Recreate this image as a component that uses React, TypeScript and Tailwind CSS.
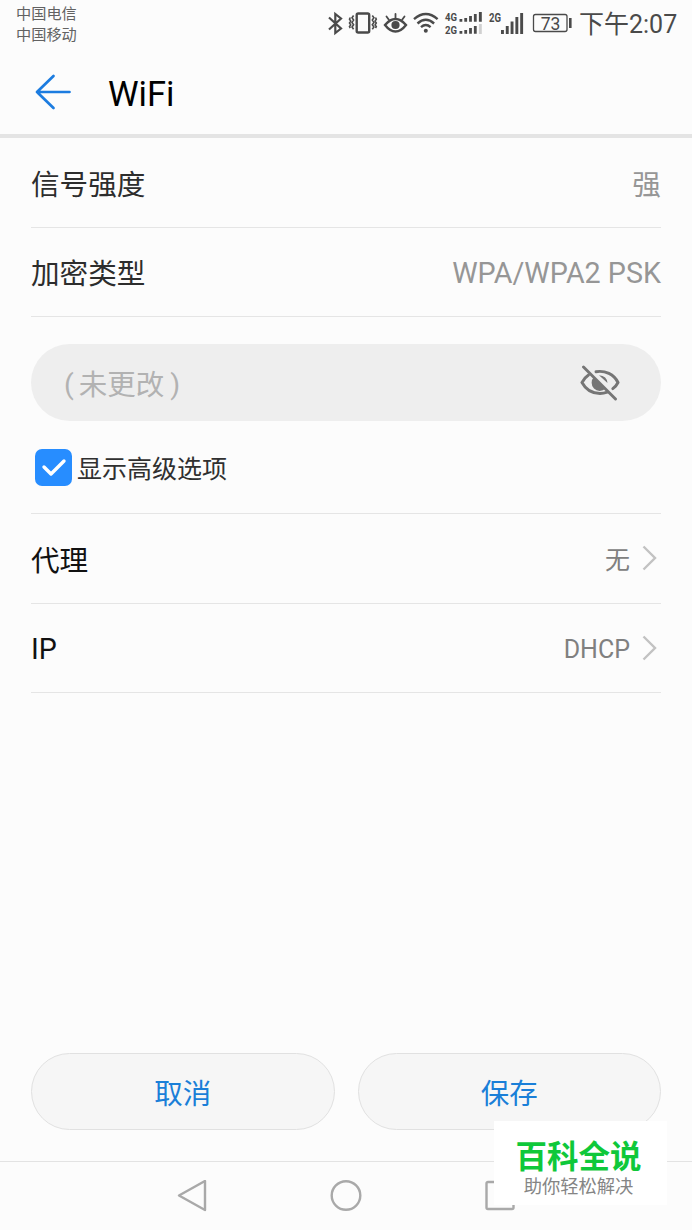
import React from "react";

const FONT = "font-['Roboto','Noto_Sans_CJK_SC',sans-serif]";

function StatusIcons() {
  return (
    <div className="flex h-12 text-[#4a4a4a]" aria-hidden="true">
      {/* bluetooth */}
      <svg className="h-12 w-[18px]" viewBox="326 0 18 48" fill="none" stroke="currentColor" strokeWidth="2.200">
        <path d="M329 17.500 341 28.500 335.300 33V14L341 18.500 329 29.500" />
      </svg>
      {/* vibrate */}
      <svg className="h-12 w-[36px]" viewBox="344 0 36 48" fill="none" stroke="currentColor">
        <rect x="356.700" y="13.500" width="12.500" height="19" rx="1.500" strokeWidth="2.400" />
        <path d="M353.600 15.500l-1.600 2.300 1.600 2.300-1.600 2.300 1.600 2.300-1.600 2.300 1.600 2.300M350.300 17.500l-.8 1.700 1.200 1.900-1.200 1.900 1.200 1.900-1.200 1.700.8 1.400M372.300 15.500l1.600 2.300-1.600 2.300 1.600 2.300-1.600 2.300 1.600 2.300-1.600 2.300M375.500 17.500l.8 1.700-1.200 1.900 1.200 1.900-1.200 1.900 1.200 1.700-.8 1.400" strokeWidth="1.600" />
      </svg>
      {/* eye comfort */}
      <svg className="h-12 w-[30px]" viewBox="380 0 30 48" fill="none" stroke="currentColor" strokeLinecap="round">
        <path d="M385 25Q390 19 395.500 19T406 25Q401 31.500 395.500 31.500T385 25Z" strokeWidth="2.400" />
        <circle cx="395.500" cy="25" r="4.100" fill="currentColor" stroke="none" />
        <path d="M395.500 14v4M386.500 16.500l2.200 3M404.500 16.500l-2.200 3" strokeWidth="1.800" />
      </svg>
      {/* wifi */}
      <svg className="h-12 w-[33px]" viewBox="410 0 33 48" fill="none" stroke="currentColor" strokeWidth="2.400">
        <path d="M414 19.200Q425.800 9 437.600 19.200M417.500 23.500Q425.800 16 434.100 23.500M421 27.200Q425.800 23 430.600 27.200" />
        <circle cx="425.800" cy="30.800" r="2" fill="currentColor" stroke="none" />
      </svg>
      {/* first SIM */}
      <svg className="h-12 w-[43px]" viewBox="443 0 43 48" fill="currentColor">
        <g className="font-['Roboto',sans-serif] text-[11px] font-bold">
          <text x="445" y="21" textLength="12" lengthAdjust="spacingAndGlyphs">4G</text>
          <text x="445" y="34" textLength="12" lengthAdjust="spacingAndGlyphs">2G</text>
        </g>
        <path d="M459.500 19h2.800v2.800h-2.800zM464.300 18h2.800v3.800h-2.800zM469.100 16h2.800v5.800h-2.800zM473.900 14h2.800v7.800h-2.800zM478.900 12h2.900v9.800h-2.900z" />
        <path d="M459.500 31h2.800v2.800h-2.800zM464.300 30h2.800v3.800h-2.800zM469.100 28h2.800v5.800h-2.800zM473.900 26h2.800v7.800h-2.800z" />
        <path d="M478.900 24h2.900v10h-2.900z" fill="#d0d0d0" />
      </svg>
      {/* second SIM */}
      <svg className="h-12 w-[42px]" viewBox="486 0 42 48" fill="currentColor">
        <text className="font-['Roboto',sans-serif] text-[12px] font-bold" x="489" y="21.500" textLength="12" lengthAdjust="spacingAndGlyphs">2G</text>
        <path d="M501 30h2.900v4h-2.900zM505.800 26h2.900v8h-2.900zM510.600 21.500h2.900v12.500h-2.900zM515.400 17h2.900v17h-2.900zM520.200 13h2.900v21h-2.900z" />
      </svg>
      {/* battery */}
      <svg className="h-12 w-[48px]" viewBox="528 0 48 48" fill="none" stroke="currentColor">
        <rect x="533.500" y="14.500" width="33.500" height="17" rx="2" strokeWidth="1.300" />
        <path d="M570.300 18v10" strokeWidth="2.600" />
        <text className="font-['Roboto',sans-serif] text-[17.500px]" x="550.500" y="29.500" textAnchor="middle" fill="currentColor" stroke="none">73</text>
      </svg>
    </div>
  );
}

function Row({ label, value, link = false }: { label: string; value: string; link?: boolean }) {
  const latinLabel = /^[\x00-\x7f]+$/.test(label);
  const latinValue = /^[\x00-\x7f]+$/.test(value);
  return (
    <div className="mx-[31px] flex h-[89.500px] shrink-0 items-center justify-between border-b border-[#e5e5e5]">
      <span className={`text-[28.600px] ${latinLabel ? "pt-[3px]" : "pt-[6px]"} ${link ? "text-[#111]" : "text-[#2d2d2d]"}`}>{label}</span>
      <span className="flex items-center">
        <span
          className={`${link ? "text-[25px] text-[#808080]" : "text-[28.700px] text-[#969696]"} ${
            latinValue ? "pt-[3px]" : link ? "pt-[4px]" : "pt-[7px]"
          }`}
        >
          {value}
        </span>
        {link && (
          <svg className="ml-3 mr-1 h-[26px] w-[15px]" viewBox="0 0 15 26" fill="none" stroke="#c2c2c2" strokeWidth="2.400">
            <path d="M1.500 1.500 13 13 1.500 24.500" />
          </svg>
        )}
      </span>
    </div>
  );
}

function ActionButton({ children }: { children: React.ReactNode }) {
  return (
    <button className="h-[77px] flex-1 rounded-full border-[1.500px] border-[#e1e1e1] bg-[#f6f6f6] pt-[7px] text-[28.500px] text-[#1a7fd8]">
      {children}
    </button>
  );
}

export default function App() {
  return (
    <div className={`${FONT} relative flex h-[1230px] w-[692px] flex-col overflow-hidden bg-[#fcfcfc] leading-none`}>
      <div className="flex h-12 shrink-0 justify-between pl-4 pr-[15px] text-[#4a4a4a]">
        <div className="pt-[4px] text-[15.200px] leading-[20.500px] text-[#626262]">
          <div>中国电信</div>
          <div>中国移动</div>
        </div>
        <div className="flex">
          <StatusIcons />
          <span className="ml-[3px] w-[98px] whitespace-nowrap pt-[11px] text-[25px] leading-[28px]">下午2:07</span>
        </div>
      </div>

      <header className="flex h-[90px] shrink-0 items-center border-b-[4px] border-[#e4e4e4] pl-[35px] pt-[2px]">
        <svg className="h-9 w-9" viewBox="0 0 36 36" fill="none" stroke="#1c7ce0" strokeWidth="2.700" strokeLinecap="round" strokeLinejoin="round">
          <path d="M18.500 2 2 18 18.500 34M2 18H34.500" />
        </svg>
        <h1 className="ml-[37px] pt-[4px] text-[34.500px] text-black">WiFi</h1>
      </header>

      <Row label="信号强度" value="强" />
      <Row label="加密类型" value="WPA/WPA2 PSK" />

      <div className="mx-[31px] mt-[27px] flex h-[77px] shrink-0 items-center justify-between rounded-full bg-[#eee] pl-[33px] pr-[41px]">
        <span className="flex items-center pt-[8px] text-[28.500px] text-[#b2b2b2]">
          <span className="-mt-[3px]">(</span>
          <span className="ml-[5px] mr-[6px]">未更改</span>
          <span className="-mt-[3px]">)</span>
        </span>
        <svg className="h-9 w-10" viewBox="0 0 40 36" fill="none" stroke="#757575" strokeWidth="2.900" strokeLinecap="round">
          <path d="M8.500 10C5.500 12 3.500 14.500 2 17.500 6 25 13 28.500 20 28.500c2.700 0 5-.5 7.300-1.300M16 6.700c9-1.500 18 2.500 22 10.800-1.200 2.500-3 4.500-5.200 6.200" />
          <path d="M14 12A7.500 7.500 0 1 0 25.500 23.500ZM19 10.200Q27 10.800 27.500 18Z" fill="#757575" stroke="none" />
          <path d="M3.500 2 35.500 34" />
        </svg>
      </div>

      <label className="mx-[31px] flex h-[93px] shrink-0 items-center border-b border-[#e5e5e5] pl-[4px]">
        <span className="flex size-[37px] items-center justify-center rounded-[7px] bg-[#278dff]">
          <svg className="h-[20px] w-[26px]" viewBox="0 0 26 20" fill="none" stroke="white" strokeWidth="3.400" strokeLinecap="round" strokeLinejoin="round">
            <path d="M3 10 10 17 23 4" />
          </svg>
        </span>
        <span className="ml-[5px] pt-[4px] text-[25px] text-[#303030]">显示高级选项</span>
      </label>

      <Row label="代理" value="无" link />
      <Row label="IP" value="DHCP" link />

      <div className="mx-[31px] mb-[31px] mt-auto flex shrink-0 gap-[23px]">
        <ActionButton>取消</ActionButton>
        <ActionButton>保存</ActionButton>
      </div>

      <nav className="flex h-[69px] shrink-0 items-center justify-between border-t border-[#e3e3e3] pl-[177px] pr-[177px]">
        <svg className="h-8 w-[30px]" viewBox="0 0 30 32" fill="none" stroke="#a9a9a9" strokeWidth="2.400" strokeLinejoin="round">
          <path d="M2 15.500 28 1V30Z" />
        </svg>
        <svg className="size-8" viewBox="0 0 32 32" fill="none" stroke="#a9a9a9" strokeWidth="2.400">
          <circle cx="16" cy="15.500" r="14.300" />
        </svg>
        <svg className="h-8 w-[30px]" viewBox="0 0 30 32" fill="none" stroke="#a9a9a9" strokeWidth="2.400">
          <rect x="1.500" y="2" width="27" height="27" rx="1.500" />
        </svg>
      </nav>

      <div className="absolute left-[494px] top-[1121px] flex h-[84px] w-[173px] flex-col items-center bg-white pr-[4px]">
        <span className="mt-[21px] text-[31.500px] font-bold text-[#0fc83a]">百科全说</span>
        <span className="mt-[4px] text-[18.300px] text-[#858585]">助你轻松解决</span>
      </div>
    </div>
  );
}
